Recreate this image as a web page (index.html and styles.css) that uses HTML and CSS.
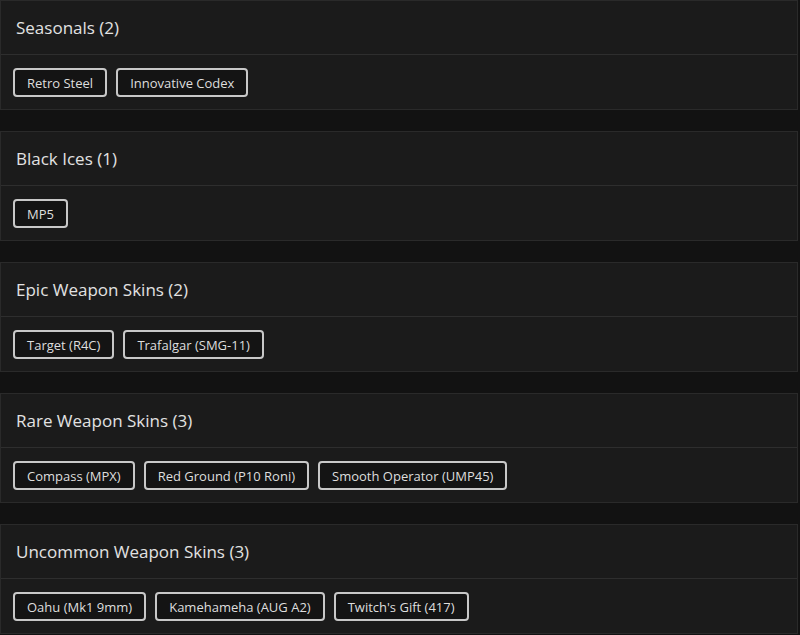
FILE: index.html
```html
<!DOCTYPE html>
<html>
<head>
<meta charset="utf-8">
<link rel="stylesheet" href="styles.css">
</head>
<body>
<div class="list">
  <section class="card">
    <div class="card-head">Seasonals (2)</div>
    <div class="card-body">
      <span class="tag">Retro Steel</span>
      <span class="tag">Innovative Codex</span>
    </div>
  </section>
  <section class="card">
    <div class="card-head">Black Ices (1)</div>
    <div class="card-body">
      <span class="tag">MP5</span>
    </div>
  </section>
  <section class="card">
    <div class="card-head">Epic Weapon Skins (2)</div>
    <div class="card-body">
      <span class="tag">Target (R4C)</span>
      <span class="tag">Trafalgar (SMG-11)</span>
    </div>
  </section>
  <section class="card">
    <div class="card-head">Rare Weapon Skins (3)</div>
    <div class="card-body">
      <span class="tag">Compass (MPX)</span>
      <span class="tag">Red Ground (P10 Roni)</span>
      <span class="tag">Smooth Operator (UMP45)</span>
    </div>
  </section>
  <section class="card">
    <div class="card-head">Uncommon Weapon Skins (3)</div>
    <div class="card-body">
      <span class="tag">Oahu (Mk1 9mm)</span>
      <span class="tag">Kamehameha (AUG A2)</span>
      <span class="tag">Twitch's Gift (417)</span>
    </div>
  </section>
</div>
</body>
</html>
```
FILE: styles.css
```css
html, body {
  margin: 0;
  padding: 0;
  background: #121212;
  font-family: "Open Sans", "Noto Sans", sans-serif;
}
.list {
  display: flex;
  flex-direction: column;
  gap: 21px;
  padding: 0 2px 0 0;
}
.card {
  background: #1b1b1b;
  border: 1px solid #2a2a2a;
}
.card-head {
  height: 54px;
  box-sizing: border-box;
  padding: 0 15px;
  display: flex;
  align-items: center;
  font-size: 17px;
  font-weight: 500;
  color: #e2e2e2;
  border-bottom: 1px solid #2e2e2e;
}
.card-body {
  display: flex;
  flex-wrap: wrap;
  gap: 9px;
  height: 54px;
  box-sizing: border-box;
  padding: 13px 12px 12px;
}
.tag {
  display: inline-flex;
  align-items: center;
  height: 29px;
  box-sizing: border-box;
  padding: 0 12px;
  border: 2px solid #c8c8c8;
  border-radius: 4px;
  background: #141414;
  color: #dedede;
  font-size: 13px;
}
```
